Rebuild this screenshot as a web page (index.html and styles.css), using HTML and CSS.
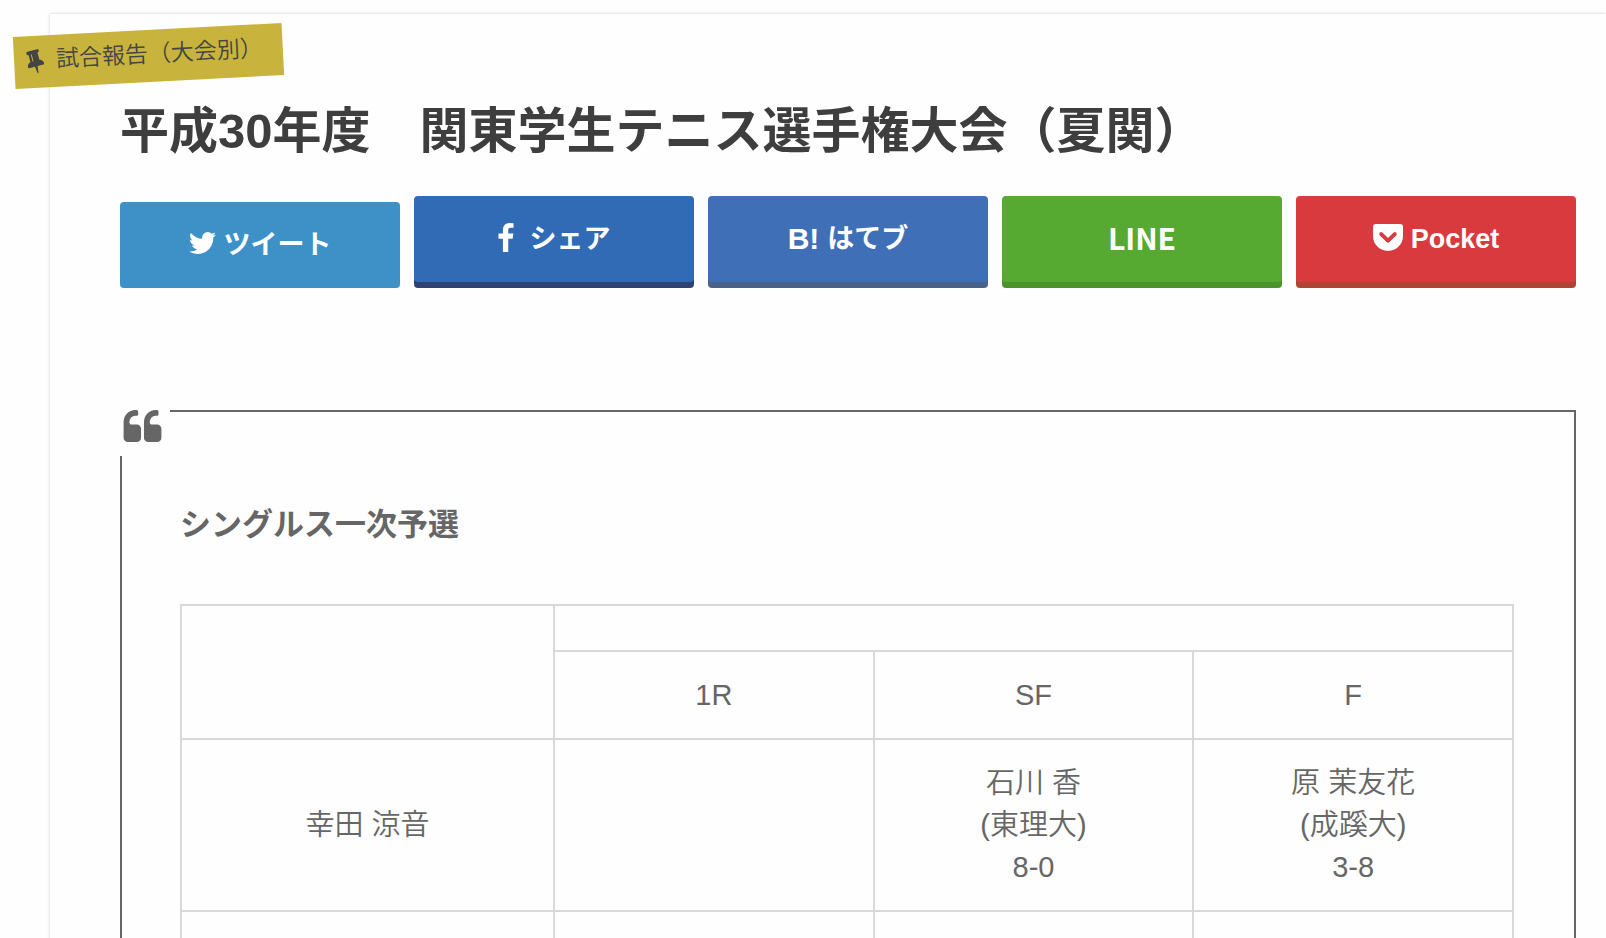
FILE: index.html
```
<!DOCTYPE html>
<html lang="ja">
<head>
  <meta charset="UTF-8">
  <meta name="viewport" content="width=device-width, initial-scale=1.0">
  <title>平成30年度　関東学生テニス選手権大会（夏関）</title>
  <link rel="stylesheet" href="styles.css">
</head>
<body>
  <article class="entry">
    <a class="category" href="#">
      <svg class="icon-pin" viewBox="320 128 1152 1664" aria-hidden="true"><path d="M800 864v-448q0-14-9-23t-23-9-23 9-9 23v448q0 14 9 23t23 9 23-9 9-23zm672 352q0 26-19 45t-45 19h-429l-51 483q-2 12-10.5 20.5t-20.5 8.5h-1q-27 0-32-27l-76-485h-404q-26 0-45-19t-19-45q0-123 78.5-221.5t177.5-98.5v-512q-52 0-90-38t-38-90 38-90 90-38h640q52 0 90 38t38 90-38 90-90 38v512q99 0 177.5 98.5t78.5 221.5z"/></svg>
      <span>試合報告（大会別）</span>
    </a>

    <h1 class="entry-title">平成30年度　関東学生テニス選手権大会（夏関）</h1>

    <!-- Share buttons -->
    <ul class="share">
      <li><a class="share-button twitter" href="#">
        <svg class="icon-twitter" viewBox="108 256 1576 1280" aria-hidden="true"><path d="M1684 408q-67 98-162 167 1 14 1 42 0 130-38 259.5t-115.5 248.5-184.5 210.5-258 146-323 54.5q-271 0-496-145 35 4 78 4 225 0 401-138-105-2-188-64.5t-114-159.5q33 5 61 5 43 0 85-11-112-23-185.5-111.5t-73.5-205.5v-4q68 38 146 41-66-44-105-115t-39-154q0-88 44-163 121 149 294.5 238.5t371.5 99.5q-8-38-8-74 0-134 94.5-228.5t228.5-94.5q140 0 236 102 109-21 205-78-37 115-142 178 93-10 186-50z"/></svg>
        <span>ツイート</span>
      </a></li>
      <li><a class="share-button facebook" href="#">
        <svg class="icon-facebook" viewBox="479 0 864 1664" aria-hidden="true"><path d="M1343 12v264h-157q-86 0-116 36t-30 108v189h293l-39 296h-254v759h-306v-759h-255v-296h255v-218q0-186 104-288.5t277-102.5q147 0 228 12z"/></svg>
        <span>シェア</span>
      </a></li>
      <li><a class="share-button hatebu" href="#">
        <span class="hatebu-mark">B!</span>
        <span>はてブ</span>
      </a></li>
      <li><a class="share-button line" href="#"><span>LINE</span></a></li>
      <li><a class="share-button pocket" href="#">
        <svg class="icon-pocket" viewBox="0 0 30 27" aria-hidden="true"><path fill-rule="evenodd" d="M3 0h24q3 0 3 3v9a15 15 0 0 1-30 0V3q0-3 3-3zM9.400 8.500a2 2 0 0 0-2.800 2.800l7 6.800a2 2 0 0 0 2.800 0l7-6.800a2 2 0 0 0-2.800-2.800L15 13.900z"/></svg>
        <span>Pocket</span>
      </a></li>
    </ul>

    <blockquote class="result">
      <svg class="icon-quote" viewBox="64 128 1664 1408" aria-hidden="true"><path d="M832 960v384q0 80-56 136t-136 56h-384q-80 0-136-56t-56-136v-704q0-104 40.500-198.500t109.500-163.500 163.500-109.500 198.500-40.500h64q26 0 45 19t19 45v128q0 26-19 45t-45 19h-64q-106 0-181 75t-75 181v32q0 40 28 68t68 28h224q80 0 136 56t56 136zm896 0v384q0 80-56 136t-136 56h-384q-80 0-136-56t-56-136v-704q0-104 40.500-198.500t109.500-163.500 163.500-109.500 198.500-40.500h64q26 0 45 19t19 45v128q0 26-19 45t-45 19h-64q-106 0-181 75t-75 181v32q0 40 28 68t68 28h224q80 0 136 56t56 136z"/></svg>
      <h2 class="result-title">シングルス一次予選</h2>
      <table class="draw">
        <tr>
          <td class="player" rowspan="2"></td>
          <td colspan="3"></td>
        </tr>
        <tr>
          <td>1R</td>
          <td>SF</td>
          <td>F</td>
        </tr>
        <tr>
          <td>幸田 涼音</td>
          <td></td>
          <td>石川 香<br>(東理大)<br>8-0</td>
          <td>原 茉友花<br>(成蹊大)<br>3-8</td>
        </tr>
        <tr>
          <td></td>
          <td></td>
          <td></td>
          <td></td>
        </tr>
      </table>
    </blockquote>
  </article>
</body>
</html>
```
FILE: styles.css
```
* {
  box-sizing: border-box;
}

body {
  margin: 0;
  background: #fefefe;
  color: #666;
  font-family: "Liberation Sans", "Noto Sans CJK JP", sans-serif;
}

.entry {
  position: relative;
  margin: 14px 0 0 50px;
  padding: 81px 30px 0 70px;
  background: #fefefe;
  box-shadow: 0 0 3px rgba(0, 0, 0, 0.2);
}

/* Ribbon stuck over the corner of the entry */
.category {
  position: absolute;
  top: 16px;
  left: -36px;
  display: flex;
  align-items: center;
  gap: 12px;
  height: 52px;
  padding: 0 20px 0 12px;
  background: #c8b43c;
  color: #444;
  font-size: 23px;
  font-weight: 350;
  line-height: 48px;
  text-decoration: none;
  white-space: nowrap;
  transform: rotate(-3deg);
}

.category span {
  padding-bottom: 4px;
}

svg {
  flex: none;
  fill: currentColor;
}

.icon-pin {
  width: 18px;
  height: 24px;
  transform: rotate(-12deg);
}

.entry-title {
  margin: 0;
  color: #3e3e3e;
  font-size: 49px;
  font-weight: bold;
  line-height: 72px;
}

.share {
  display: grid;
  grid-template-columns: repeat(5, 1fr);
  gap: 14px;
  margin: 29px 0 0;
  padding: 0;
  list-style: none;
}

.share-button {
  display: flex;
  align-items: center;
  justify-content: center;
  gap: 8px;
  height: 86px;
  border-radius: 4px;
  color: #fff;
  font-size: 27px;
  font-weight: bold;
  line-height: 30px;
  text-decoration: none;
}

.share-button svg {
  margin-bottom: 4px;
}

/* pressed state */
.twitter {
  margin-top: 6px;
  background: #3e91c7;
}

.facebook {
  gap: 16px;
  background: #326bb5;
  box-shadow: 0 6px 0 #2f4271;
}

.hatebu {
  background: #3f70b7;
  box-shadow: 0 6px 0 #4a6287;
}

.hatebu-mark {
  font-size: 30px;
}

.line {
  background: #56aa31;
  box-shadow: 0 6px 0 #4b942b;
  padding-bottom: 4px;
  font-family: "Noto Sans CJK JP", sans-serif;
  font-size: 30px;
}

.pocket {
  background: #d93a3e;
  box-shadow: 0 6px 0 #b04333;
}

.icon-twitter {
  width: 27px;
  height: 22px;
}

.icon-facebook {
  width: 16px;
  height: 29px;
}

.icon-pocket {
  width: 30px;
  height: 27px;
}

.result {
  position: relative;
  margin: 122px 0 0;
  padding: 85px 60px 0 58px;
  border: 2px solid #666;
}

/* Covers the corner of the frame */
.icon-quote {
  position: absolute;
  top: -2px;
  left: -2px;
  width: 50px;
  height: 46px;
  padding: 0 8px 14px 3px;
  background: #fefefe;
}

.result-title {
  margin: 0 0 51px;
  font-size: 31px;
  line-height: 56px;
}

.draw {
  width: 100%;
  table-layout: fixed;
  border-collapse: collapse;
  font-size: 29px;
  font-weight: 350;
  line-height: 42px;
  text-align: center;
}

.draw td {
  padding: 22px;
  border: 2px solid #d8d8d8;
}

.draw .player {
  width: 28%;
}
```
